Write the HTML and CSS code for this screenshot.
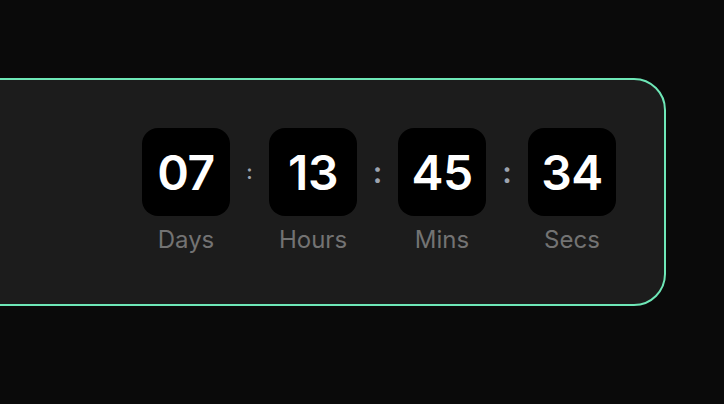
FILE: index.html
```html
<!DOCTYPE html>
<html lang="en">
<head>
<meta charset="utf-8">
<link rel="stylesheet" href="styles.css">
</head>
<body>
<div class="stage">
  <div class="card">
    <div class="timer">
      <div class="unit">
        <div class="box">07</div>
        <div class="label">Days</div>
      </div>
      <div class="sep sep-sm">:</div>
      <div class="unit">
        <div class="box">13</div>
        <div class="label">Hours</div>
      </div>
      <div class="sep sep-md">:</div>
      <div class="unit">
        <div class="box">45</div>
        <div class="label">Mins</div>
      </div>
      <div class="sep">:</div>
      <div class="unit">
        <div class="box">34</div>
        <div class="label">Secs</div>
      </div>
    </div>
  </div>
</div>
</body>
</html>
```

FILE: styles.css
```css
html, body {
  margin: 0;
  padding: 0;
  background: #0a0a0a;
  height: 100%;
  overflow: hidden;
  font-family: Inter, "Liberation Sans", sans-serif;
}
.stage {
  display: flex;
  justify-content: flex-end;
  padding: 78px 58px 0 0;
}
.card {
  flex-shrink: 0;
  width: 800px;
  box-sizing: border-box;
  background: #1c1c1c;
  border: 2px solid #6ee7b7;
  border-radius: 32px;
  padding: 48px 48px 48px 0;
  display: flex;
  justify-content: flex-end;
}
.timer {
  display: flex;
  align-items: flex-start;
  gap: 16px;
}
.unit {
  display: flex;
  flex-direction: column;
  align-items: center;
  width: 88px;
}
.box {
  width: 88px;
  height: 88px;
  background: #000;
  border-radius: 16px;
  color: #fff;
  font-size: 48px;
  font-weight: 600;
  line-height: 90px;
  text-align: center;
  letter-spacing: -0.5px;
}
.label {
  margin-top: 8px;
  font-size: 24px;
  line-height: 32px;
  color: #737373;
}
.sep {
  width: 10px;
  height: 88px;
  display: flex;
  align-items: center;
  justify-content: center;
  color: #9ca3af;
  font-size: 30px;
  font-weight: 600;
}
.sep-md {
  width: 9px;
}
.sep-sm {
  width: 7px;
  font-size: 20px;
}
```
